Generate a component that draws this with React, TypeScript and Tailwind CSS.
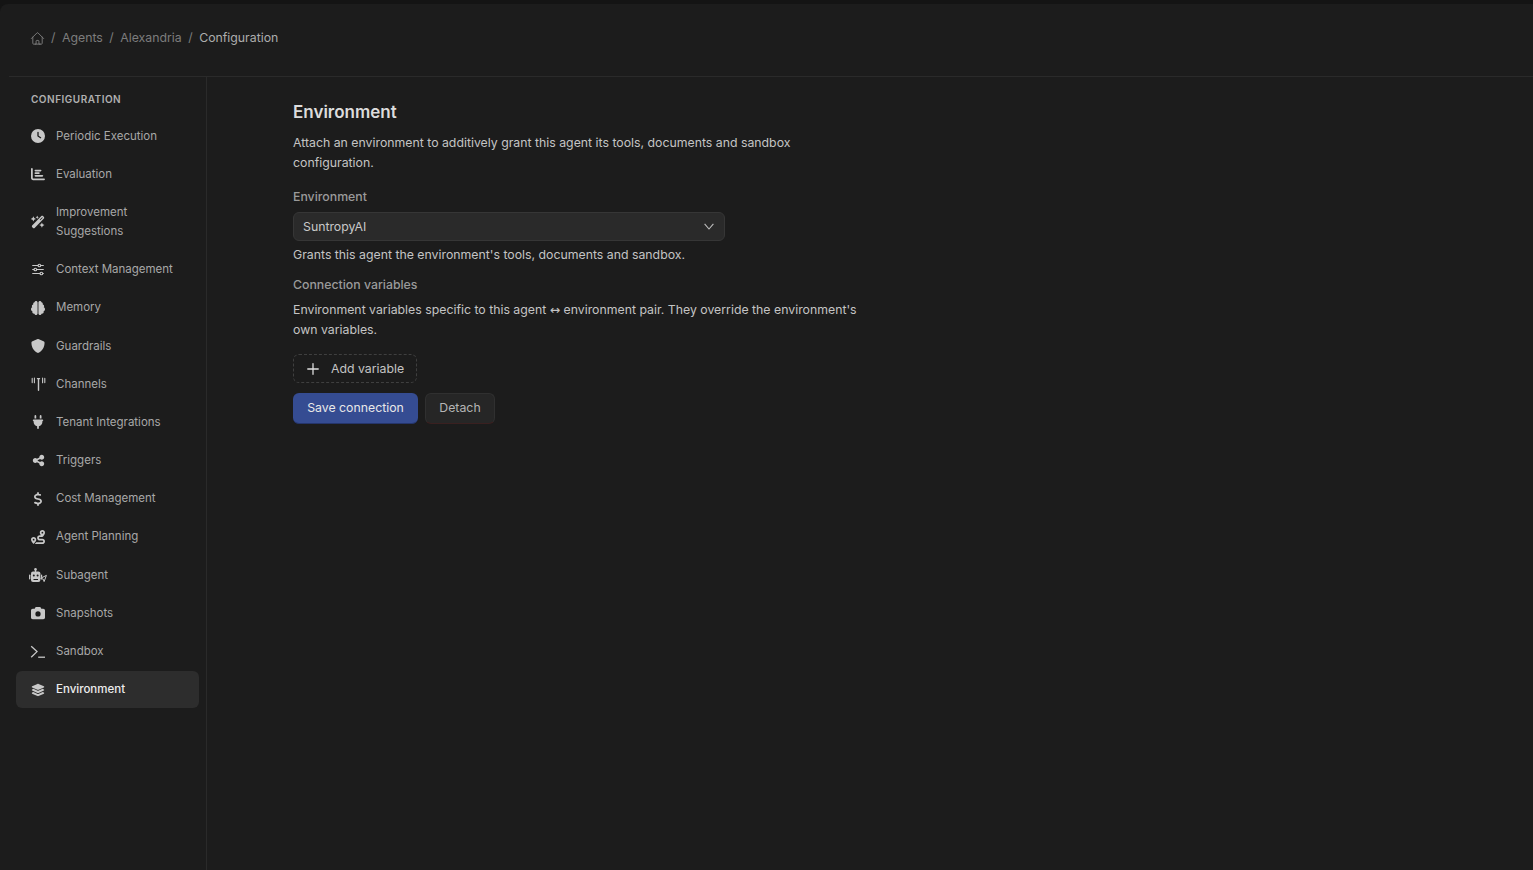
import type { ReactNode } from "react";
import { Plus } from "lucide-react";
import {
  FaBrain,
  FaCamera,
  FaChartBar,
  FaClock,
  FaDollarSign,
  FaLayerGroup,
  FaPlug,
  FaRoute,
  FaShareNodes,
  FaShield,
  FaWandMagicSparkles,
} from "react-icons/fa6";
import { HiOutlineHome } from "react-icons/hi2";
import { TbAdjustmentsHorizontal } from "react-icons/tb";

type NavItem = { label: ReactNode; icon: ReactNode; active?: boolean };

function ChannelsIcon() {
  return (
    <svg width="15" height="14" viewBox="0 0 15 14" fill="none" stroke="currentColor" strokeLinecap="round">
      <path d="M7.5 2v11.2" strokeWidth="1.4" />
      <path d="M6.4 1.6h2.2" strokeWidth="1.2" />
      <path d="M1.2 1.4v4.2M3.4 1v4.8M11.6 1v4.8M13.8 1.4v4.2" strokeWidth="1.1" />
    </svg>
  );
}

function SandboxIcon() {
  return (
    <svg width="16" height="14" viewBox="0 0 16 14" fill="none" stroke="currentColor" strokeWidth="1.3">
      <path d="M1.2 1.2 7 6.6l-5.8 5.6" />
      <path d="M8.2 12.2H15" />
    </svg>
  );
}

function SubagentIcon() {
  return (
    <svg width="18" height="15" viewBox="0 0 18 15" className="-ml-px shrink-0">
      <g fill="currentColor">
        <circle cx="6.5" cy="1.4" r="1.3" />
        <rect x="5.9" y="1.5" width="1.2" height="2.5" />
        <rect x="2" y="3.5" width="9.4" height="10.5" rx="2" />
        <rect x="0" y="6.5" width="1.4" height="5" rx=".7" />
        <rect x="12" y="6.5" width="1.2" height="5" rx=".6" />
      </g>
      <g fill="#1c1c1c">
        <circle cx="4.8" cy="7.5" r="1" />
        <circle cx="8.6" cy="7.5" r="1" />
        <rect x="4.5" y="11" width="4.5" height="1" />
      </g>
      <path d="M17.4 7.4 11.6 10.3l2.6.8.9 2.5z" fill="#1c1c1c" stroke="currentColor" strokeWidth="1" strokeLinejoin="round" />
    </svg>
  );
}

const nav: NavItem[] = [
  { label: "Periodic Execution", icon: <FaClock size={14} /> },
  { label: "Evaluation", icon: <FaChartBar size={14} /> },
  { label: "Improvement Suggestions", icon: <FaWandMagicSparkles size={14} /> },
  { label: "Context Management", icon: <TbAdjustmentsHorizontal size={17} strokeWidth={1.6} /> },
  { label: "Memory", icon: <FaBrain size={14} /> },
  { label: "Guardrails", icon: <FaShield size={14} /> },
  { label: "Channels", icon: <ChannelsIcon /> },
  { label: "Tenant Integrations", icon: <FaPlug size={14} /> },
  { label: "Triggers", icon: <FaShareNodes size={13} /> },
  { label: "Cost Management", icon: <FaDollarSign size={14} /> },
  { label: "Agent Planning", icon: <FaRoute size={14} /> },
  { label: "Subagent", icon: <SubagentIcon /> },
  { label: "Snapshots", icon: <FaCamera size={14} /> },
  { label: "Sandbox", icon: <SandboxIcon /> },
  { label: "Environment", icon: <FaLayerGroup size={14} />, active: true },
];

export default function App() {
  return (
    <div className="h-[870px] overflow-hidden bg-[#141414] pt-1 font-['Inter',sans-serif] text-[11.5px] text-[#c4c4c4]">
      <div className="flex h-[866px] flex-col rounded-tl-lg bg-[#1c1c1c]">
        <header className="ml-[9px] flex h-[73px] shrink-0 items-center gap-[6.5px] border-b border-[#2a2a2a] pb-[3px] pl-[20.5px] text-[12.3px] text-[#7c7c7c]">
          <HiOutlineHome size={15} />
          <span>/</span>
          <span>Agents</span>
          <span>/</span>
          <span>Alexandria</span>
          <span>/</span>
          <span className="text-[#adadad]">Configuration</span>
        </header>
        <div className="flex min-h-0 flex-1">
          <aside className="flex w-[207px] shrink-0 flex-col gap-px border-r border-[#2a2a2a] pt-[14px] pr-[7px] pl-4">
            <div className="pb-[9.5px] pl-[15px] text-[10px] leading-4 font-semibold tracking-[0.5px] text-[#b0b0b0]">
              CONFIGURATION
            </div>
            {nav.map((item, i) => (
              <a
                key={i}
                className={
                  item.active
                    ? "flex items-center rounded-md bg-[#2d2d2d] py-[9.1px] pl-[14px] leading-[19px] font-medium text-[#ededed]"
                    : "flex items-center rounded-md py-[9.1px] pl-[14px] leading-[19px] text-[#a8a8a8]"
                }
              >
                <span className="flex w-4 shrink-0 justify-center text-[#c8c8c8]">{item.icon}</span>
                <span className="ml-[10px] w-[110px] grow pr-4">{item.label}</span>
              </a>
            ))}
          </aside>
          <main className="min-w-0 flex-1 pt-[21px] pl-[86px]">
            <div className="w-[570px] text-[12.3px]">
              <h1 className="text-[17px] leading-7 font-semibold text-[#dcdcdc]">Environment</h1>
              <p className="mt-[7px] leading-5 text-[#c4c4c4]">
                Attach an environment to additively grant this agent its tools, documents and sandbox configuration.
              </p>
              <div className="mt-[15px] leading-[18px] font-medium text-[#9a9a9a]">Environment</div>
              <div className="mt-[6px] flex h-[29px] w-[432px] items-center justify-between rounded-md border border-[#363636] bg-[#2a2a2a] pr-[10px] pl-[9px] text-[#c8c8c8]">
                <span className="pt-px">SuntropyAI</span>
                <svg width="10" height="7" viewBox="0 0 10 7" fill="none" stroke="#bdbdbd" strokeWidth="1.1">
                  <path d="M.6.8 5 6 9.4.8" />
                </svg>
              </div>
              <p className="mt-1 leading-5 text-[#c4c4c4]">
                Grants this agent the environment's tools, documents and sandbox.
              </p>
              <div className="mt-[11px] leading-[18px] font-medium text-[#9a9a9a]">Connection variables</div>
              <p className="mt-[6px] leading-5 text-[#c4c4c4]">
                Environment variables specific to this agent{" "}
                <span className="font-['DejaVu_Sans',sans-serif]">↔</span> environment pair. They override the environment's
                <br />
                own variables.
              </p>
              <button
                type="button"
                className="mt-[14px] flex h-[29px] w-[124px] items-center rounded-md border border-dashed border-[#3f3f3f] pl-[9.5px] text-[#c4c4c4]"
              >
                <Plus size={18} strokeWidth={1.7} className="text-[#e0e0e0]" />
                <span className="ml-[9.5px] pt-px">Add variable</span>
              </button>
              <div className="mt-[10px] flex gap-[7px]">
                <button
                  type="button"
                  className="h-[31px] w-[125px] rounded-md border-b border-[#25356b] bg-[#354c92] text-[#e8e8e8]"
                >
                  Save connection
                </button>
                <button
                  type="button"
                  className="h-[31px] w-[70px] rounded-md border border-[#303030] border-b-[#3a2020] bg-[#262626] text-[#b5b5b5]"
                >
                  Detach
                </button>
              </div>
            </div>
          </main>
        </div>
      </div>
    </div>
  );
}
